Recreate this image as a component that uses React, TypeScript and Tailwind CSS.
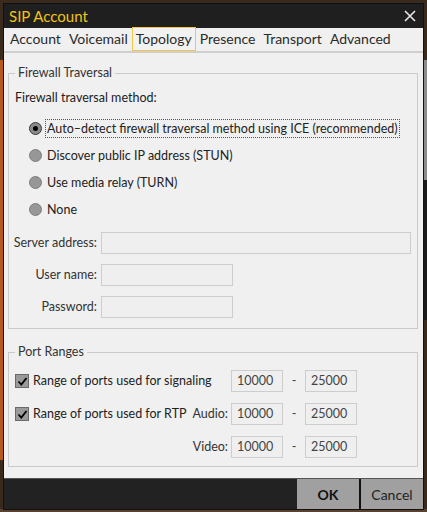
import React from "react";

const font = { fontFamily: 'Lato, "Liberation Sans", sans-serif' };

function Radio({ checked, label }: { checked?: boolean; label: string }) {
  return (
    <div className="flex items-center h-[18px] pl-[20px]">
      <span
        className={
          "w-[13px] h-[13px] rounded-full flex items-center justify-center shrink-0 " +
          (checked ? "bg-[#8a8a8a] border border-[#3a3a3a]" : "bg-[#979797] border border-[#7e7e7e]")
        }
      >
        {checked && <span className="w-[5px] h-[5px] rounded-full bg-black" />}
      </span>
      <span
        className={
          "ml-[4px] px-[1px] leading-[17px] whitespace-nowrap " +
          (checked ? "outline outline-1 outline-dotted outline-[#555]" : "")
        }
      >
        {label}
      </span>
    </div>
  );
}

function Field({ w }: { w: string }) {
  return <div className={"h-[22px] border border-[#cdcdcd] bg-[#efefef] " + w} />;
}

function PortInput({ value }: { value: string }) {
  return (
    <div className="w-[52px] h-[22px] border border-[#cdcdcd] bg-[#efefef] text-[#444] pl-[5px] leading-[20px]">
      {value}
    </div>
  );
}

function Check() {
  return (
    <span className="w-[14px] h-[14px] bg-[#9a9a9a] border border-[#6a6a6a] flex items-center justify-center shrink-0">
      <svg width="11" height="11" viewBox="0 0 11 11">
        <path d="M1.5 5.5 L4.3 8.5 L9.5 2" fill="none" stroke="#000" strokeWidth="1.8" />
      </svg>
    </span>
  );
}

function PortRow({ label, sub, check }: { label?: string; sub?: string; check?: boolean }) {
  return (
    <div className="flex items-center h-[22px]">
      <div className="flex items-center w-[222px] pl-[6px] pr-[3px]">
        {check ? <Check /> : <span className="w-[14px]" />}
        <span className="ml-[4px] text-[#222] whitespace-nowrap">{label}</span>
        <span className="ml-auto text-[#333]">{sub}</span>
      </div>
      <PortInput value="10000" />
      <span className="w-[22px] text-center text-[#444]">-</span>
      <PortInput value="25000" />
    </div>
  );
}

export default function App() {
  return (
    <div className="w-[427px] h-[512px] bg-[#3a2a1e] relative overflow-hidden" style={font}>
      {/* desktop scraps */}
      <div className="absolute left-0 top-[60px] w-[3px] h-[400px] bg-[#b65a1c]" />
      <div className="absolute right-0 top-[180px] w-[3px] h-[140px] bg-[#1a1a1a]" />
      <div className="absolute right-0 top-[60px] w-[3px] h-[120px] bg-[#8c8c8c]" />
      <div className="absolute left-0 bottom-0 w-full h-[3px] bg-[#5a4030]" />

      <div className="absolute left-[3px] top-[3px] w-[421px] h-[507px] flex flex-col border border-[#111]">
        {/* title */}
        <div className="h-[24px] bg-[#1f1f1f] flex items-center justify-between pl-[5px] pr-[7px]">
          <span className="text-[#f2c21b] text-[15px] leading-none">SIP Account</span>
          <svg width="12" height="12" viewBox="0 0 12 12">
            <path d="M1 1 L11 11 M11 1 L1 11" stroke="#e8e8e8" strokeWidth="1.6" />
          </svg>
        </div>

        {/* body */}
        <div className="flex-1 bg-[#f0f0f0] flex flex-col text-[12.5px] text-[#222]">
          <div className="flex items-end h-[25px] pl-[2px] border-b-2 border-[#cfcfcf] text-[14px] text-[#2a2a2a] whitespace-nowrap">
            <span className="px-[4px] h-[24px] leading-[24px]">Account</span>
            <span className="px-[4px] h-[24px] leading-[24px]">Voicemail</span>
            <span className="px-[3px] h-[24px] leading-[22px] border border-[#f3c64a] bg-[#f2f2f2]">Topology</span>
            <span className="px-[4px] h-[24px] leading-[24px]">Presence</span>
            <span className="px-[4px] h-[24px] leading-[24px]">Transport</span>
            <span className="px-[4px] h-[24px] leading-[24px]">Advanced</span>
          </div>

          {/* firewall group */}
          <fieldset className="ml-[4px] mr-[5px] mt-[12px] border border-[#cacaca] pb-[10px] px-0">
            <legend className="ml-[6px] px-[3px] leading-[16px] text-[#333]">Firewall Traversal</legend>
            <div className="pl-[6px] mt-[8px] leading-[17px]">Firewall traversal method:</div>
            <div className="mt-[13px] flex flex-col gap-[9px]">
              <Radio checked label="Auto–detect firewall traversal method using ICE (recommended)" />
              <Radio label="Discover public IP address (STUN)" />
              <Radio label="Use media relay (TURN)" />
              <Radio label="None" />
            </div>
            <div className="mt-[14px] grid grid-cols-[88px_1fr] gap-x-[4px] gap-y-[10px] items-center pr-[6px]">
              <span className="text-right text-[#333] whitespace-nowrap">Server address:</span>
              <Field w="w-full" />
              <span className="text-right text-[#333]">User name:</span>
              <Field w="w-[132px]" />
              <span className="text-right text-[#333]">Password:</span>
              <Field w="w-[132px]" />
            </div>
          </fieldset>

          {/* ports */}
          <fieldset className="ml-[4px] mr-[5px] mt-[15px] border border-[#cacaca] pb-[8px] px-0">
            <legend className="ml-[6px] px-[3px] leading-[16px] text-[#333]">Port Ranges</legend>
            <div className="mt-[10px] flex flex-col gap-[11px]">
              <PortRow check label="Range of ports used for signaling" />
              <PortRow check label="Range of ports used for RTP" sub="Audio:" />
              <PortRow sub="Video:" />
            </div>
          </fieldset>
          <div className="flex-1" />
        </div>

        {/* buttons */}
        <div className="h-[31px] bg-[#222] flex justify-end border-t border-[#555]">
          <div className="w-[62px] bg-[#a0a0a0] flex items-center justify-center font-bold text-[14px] text-[#111]">OK</div>
          <div className="w-[2px] bg-[#111]" />
          <div className="w-[62px] bg-[#a0a0a0] flex items-center justify-center text-[14px] text-[#222]">Cancel</div>
        </div>
      </div>
    </div>
  );
}
